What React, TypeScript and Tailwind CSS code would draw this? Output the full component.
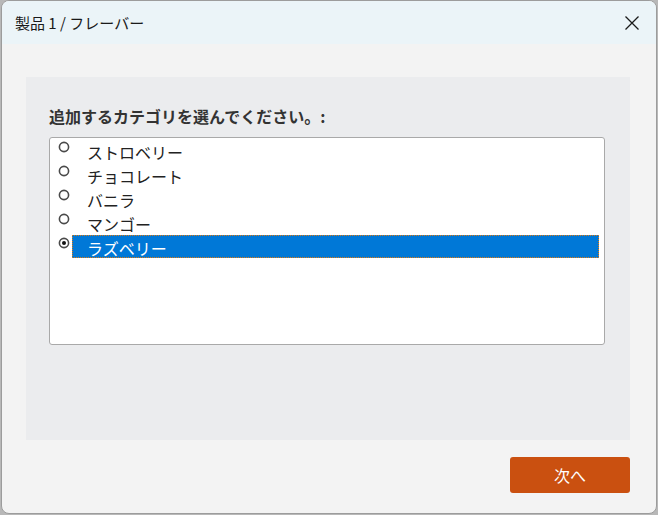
import React from "react";

const items = ["ストロベリー", "チョコレート", "バニラ", "マンゴー", "ラズベリー"];

function Radio({ checked }: { checked: boolean }) {
  return (
    <svg width="12" height="12" viewBox="0 0 12 12" className="shrink-0">
      <circle cx="6" cy="6" r="4.6" fill="white" stroke="#4a4a4a" strokeWidth="1.6" />
      {checked && <circle cx="6" cy="6" r="2" fill="#111" />}
    </svg>
  );
}

export default function App() {
  const font = { fontFamily: '"Noto Sans CJK JP", "Noto Sans", sans-serif' };
  return (
    <div className="w-[658px] h-[515px] bg-[#b8b8b8] overflow-hidden" style={font}>
      <div className="ml-[1px] w-[656px] h-[514px] rounded-[8px] border border-[#9c9c9c] bg-[#f3f3f3] overflow-hidden flex flex-col">
        <div className="h-[43px] bg-[#ebf4f8] flex items-center justify-between pl-[13px] pr-[16px] shrink-0">
          <span className="text-[15px] text-[#1a1a1a] leading-none">製品 1 / フレーバー</span>
          <svg width="16" height="16" viewBox="0 0 16 16">
            <path d="M1.5 1.5 L14.5 14.5 M14.5 1.5 L1.5 14.5" stroke="#1a1a1a" strokeWidth="1.3" fill="none" />
          </svg>
        </div>
        <div className="flex-1 flex flex-col pl-[24px] pr-[26px] pt-[33px]">
          <div className="h-[363px] bg-[#ebecee] pl-[23px] pr-[25px] pt-[25px]">
            <div className="text-[16px] font-bold text-[#333] leading-[28px]">追加するカテゴリを選んでください。:</div>
            <div className="mt-[7px] h-[208px] bg-white border border-[#a9a9a9] rounded-[3px] pt-[1px] pr-[5px]">
              {items.map((it, i) => {
                const sel = i === items.length - 1;
                return (
                  <div key={it} className="flex items-start h-[24px]">
                    <div className="w-[20px] flex justify-end pt-[2px] shrink-0">
                      <Radio checked={sel} />
                    </div>
                    <div
                      className={
                        "ml-[2px] flex-1 h-[23px] flex items-center pl-[14px] pt-[3px] text-[16px] leading-none " +
                        (sel
                          ? "bg-[#0078d7] text-white border border-dotted border-[#e07a10]"
                          : "text-[#222] border border-transparent")
                      }
                    >
                      {it}
                    </div>
                  </div>
                );
              })}
            </div>
          </div>
          <div className="flex justify-end mt-[17px]">
            <button className="w-[120px] h-[36px] bg-[#ca5010] rounded-[3px] text-white text-[16px]">次へ</button>
          </div>
        </div>
      </div>
    </div>
  );
}
